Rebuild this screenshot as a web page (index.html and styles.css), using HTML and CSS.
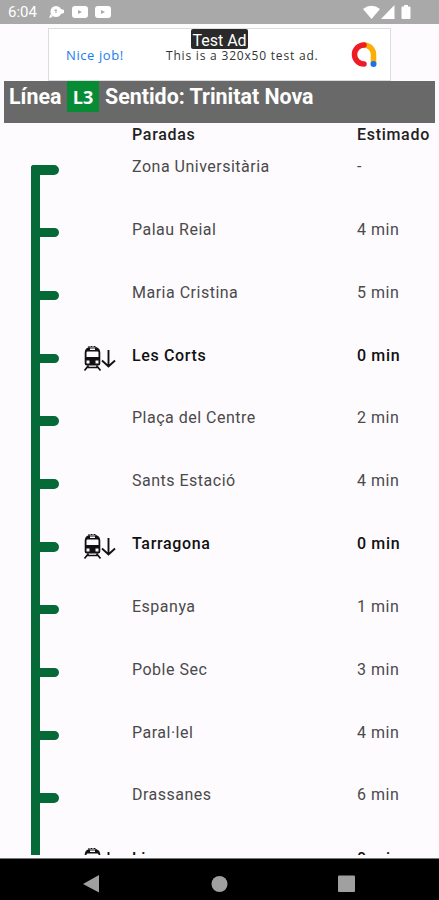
FILE: index.html
```html
<!DOCTYPE html>
<html lang="es">
<head>
    <meta charset="UTF-8">
    <meta name="viewport" content="width=device-width, initial-scale=1.0">
    <title>Línea L3</title>
    <link rel="stylesheet" href="styles.css">
</head>
<body>

    <!-- Train icon shared by the rows -->
    <svg width="0" height="0" class="defs">
        <symbol id="train" viewBox="0 0 34 30">
            <path d="M7 4V2.500h7V4" fill="none" stroke="#111" stroke-width="1.200" stroke-dasharray="2 1"/>
            <path fill="#111" fill-rule="evenodd" d="M6 3.500h9q3 1 3.300 5v11q0 2-2 2H4.700q-2 0-2-2v-11Q3 4.500 6 3.500zM5.500 7.500q-1 0-1 1V13h12V8.500q0-1-1-1zM4.500 16.500v3h3v-3zM13.500 16.500v3h3v-3zM8 4.500V6h5V4.500z"/>
            <path d="M6.500 21.500l-4 5M14.500 21.500l4 5M5 23.500h11" fill="none" stroke="#111" stroke-width="1.700"/>
            <path d="M26.500 6v16.500M20 16.500l6.500 6 6.500-6" fill="none" stroke="#111" stroke-width="1.900"/>
        </symbol>
    </svg>

    <div class="status-bar">
        <span class="clock">6:04</span>
        <svg class="status-left" width="64" height="14" viewBox="0 0 64 14" fill="#fff">
            <circle cx="7" cy="6.500" r="5.500"/>
            <path d="M2 8.500l-2 4.500 3.500-1zM12 4l3 1v3l-3 1z"/>
            <path d="M7 4v4M5.500 5.500h2" stroke="#a9a9a9"/>
            <rect x="23" y="1" width="16" height="12" rx="3"/>
            <path d="M29 5v4l4-2z" fill="#a9a9a9"/>
            <rect x="46" y="1" width="16" height="12" rx="3"/>
            <path d="M52 5v4l4-2z" fill="#a9a9a9"/>
        </svg>
        <svg class="status-right" width="50" height="15" viewBox="0 0 50 15" fill="#fff">
            <path d="M0 4Q8.500-2.500 17 4L8.500 14z"/>
            <path d="M31.500 0v14h-13.500z"/>
            <path d="M41 1.500V0h4v1.500h1.500q1 0 1 1V13q0 1-1 1h-7q-1 0-1-1V2.500q0-1 1-1z"/>
        </svg>
    </div>

    <div class="ad">
        <span class="ad-nice">Nice job!</span>
        <span class="ad-text">This is a 320x50 test ad.</span>
        <span class="ad-label">Test Ad</span>
        <svg class="ad-logo" width="28" height="28" viewBox="0 0 28 28" fill="none" stroke-width="5.500" stroke-linecap="round">
            <path d="M14 4a9.500 9.500 0 0 1 9.500 9.500V22" stroke="#fbaf06"/>
            <path d="M14 4a9.500 9.500 0 1 0 0 19" stroke="#ee1c25"/>
            <circle cx="23.500" cy="23" r="3" fill="#1a73e8"/>
        </svg>
    </div>

    <div class="line-header">
        <span class="line">Línea</span>
        <span class="badge">L3</span>
        <span>Sentido: Trinitat Nova</span>
    </div>

    <div class="content">
        <div class="titles">
            <span class="stop">Paradas</span>
            <span class="time">Estimado</span>
        </div>
        <div class="row first">
            <div class="track"><i></i></div>
            <span class="stop">Zona Universitària</span>
            <span class="time">-</span>
        </div>
        <div class="row">
            <div class="track"><i></i></div>
            <span class="stop">Palau Reial</span>
            <span class="time">4 min</span>
        </div>
        <div class="row">
            <div class="track"><i></i></div>
            <span class="stop">Maria Cristina</span>
            <span class="time">5 min</span>
        </div>
        <div class="row here">
            <div class="track"><i></i></div>
            <svg class="train" width="34" height="30"><use href="#train"/></svg>
            <span class="stop">Les Corts</span>
            <span class="time">0 min</span>
        </div>
        <div class="row">
            <div class="track"><i></i></div>
            <span class="stop">Plaça del Centre</span>
            <span class="time">2 min</span>
        </div>
        <div class="row">
            <div class="track"><i></i></div>
            <span class="stop">Sants Estació</span>
            <span class="time">4 min</span>
        </div>
        <div class="row here">
            <div class="track"><i></i></div>
            <svg class="train" width="34" height="30"><use href="#train"/></svg>
            <span class="stop">Tarragona</span>
            <span class="time">0 min</span>
        </div>
        <div class="row">
            <div class="track"><i></i></div>
            <span class="stop">Espanya</span>
            <span class="time">1 min</span>
        </div>
        <div class="row">
            <div class="track"><i></i></div>
            <span class="stop">Poble Sec</span>
            <span class="time">3 min</span>
        </div>
        <div class="row">
            <div class="track"><i></i></div>
            <span class="stop">Paral·lel</span>
            <span class="time">4 min</span>
        </div>
        <div class="row">
            <div class="track"><i></i></div>
            <span class="stop">Drassanes</span>
            <span class="time">6 min</span>
        </div>
        <div class="row here last">
            <div class="track"></div>
            <svg class="train" width="34" height="30"><use href="#train"/></svg>
            <span class="stop">Liceu</span>
            <span class="time">0 min</span>
        </div>
    </div>

    <div class="nav-bar">
        <svg width="439" height="41" viewBox="0 0 439 41" fill="#a0a0a0">
            <path d="M83 25l16-9v17.500z"/>
            <circle cx="219.500" cy="25" r="8"/>
            <rect x="338" y="16.500" width="17" height="16.500" rx="1"/>
        </svg>
    </div>

</body>
</html>
```
FILE: styles.css
```css
* {
    box-sizing: border-box;
}

body {
    font-family: Roboto, "Liberation Sans", sans-serif;
    margin: 0;
    height: 900px;
    display: flex;
    flex-direction: column;
    background-color: #fefbff;
    overflow: hidden;
}

.defs {
    position: absolute;
}

.status-bar {
    display: flex;
    align-items: center;
    flex: none;
    height: 24px;
    padding: 0 22px 0 8px;
    background-color: #a9a9a9;
    color: #fff;
}

.clock {
    width: 41px;
    font-size: 15px;
}

.status-right {
    margin-left: auto;
    margin-right: 4px;
}

.ad {
    position: relative;
    display: flex;
    align-items: center;
    flex: none;
    width: 343px;
    height: 53px;
    margin: 4px 0 0 48px;
    border: 1px solid #ddd;
    background-color: #fff;
    font-family: "Open Sans", sans-serif;
    font-size: 12px;
}

.ad-nice {
    width: 99px;
    padding-left: 17px;
    color: #1a7cf0;
    font-size: 13px;
    letter-spacing: 0.6px;
    white-space: nowrap;
}

.ad-text {
    width: 202px;
    padding-left: 18px;
    padding-top: 2px;
    color: #333;
    letter-spacing: 0.8px;
    white-space: nowrap;
}

.ad-label {
    position: absolute;
    left: 142px;
    top: 0;
    width: 57px;
    height: 20px;
    border-radius: 2px;
    background-color: #2a2a2a;
    color: #fff;
    font-family: Roboto, sans-serif;
    font-size: 16px;
    line-height: 23px;
    text-align: center;
}

.line-header {
    display: flex;
    flex: none;
    height: 42px;
    margin: 0 4px;
    padding-left: 5px;
    background-color: #696969;
    color: #fff;
    font-size: 21.4px;
    font-weight: bold;
    line-height: 31px;
    white-space: nowrap;
}

.line {
    width: 58px;
}

.badge {
    width: 32px;
    height: 31px;
    margin-right: 6px;
    background-color: #078b35;
    font-family: "Open Sans", sans-serif;
    font-size: 18px;
    text-align: center;
    line-height: 33px;
}

.content {
    flex: none;
    height: 731.5px;
    overflow: hidden;
    color: #4a4a4a;
    font-size: 16px;
    letter-spacing: 0.5px;
    line-height: 24.6px;
}

.titles,
.row {
    display: grid;
    grid-template-columns: 31px 51px 50px 225px 1fr;
    white-space: nowrap;
}

.titles {
    height: 32px;
    color: #222;
    font-weight: 500;
    letter-spacing: 0.7px;
}

.row {
    height: 62.85px;
}

.stop {
    grid-column: 4;
    grid-row: 1;
}

.time {
    grid-column: 5;
    grid-row: 1;
}

.here {
    color: #111;
    font-weight: 500;
    letter-spacing: 0.65px;
}

.last {
    line-height: 26px;
}

.track {
    grid-column: 2;
    grid-row: 1;
    width: 8.5px;
    height: 62.85px;
    padding-top: 10px;
    background-color: #056938;
}

.track i {
    display: block;
    width: 28px;
    height: 9.5px;
    border-radius: 3px 5px 5px 0;
    background-color: #056938;
}

.first .track {
    height: 52.85px;
    margin-top: 10px;
    padding-top: 0;
    border-radius: 3px 0 0 0;
}

.train {
    grid-column: 3;
    grid-row: 1;
}

.nav-bar {
    flex: none;
    height: 42px;
    margin-top: 3.5px;
    border-top: 1px solid #777;
    background-color: #000;
}
```
